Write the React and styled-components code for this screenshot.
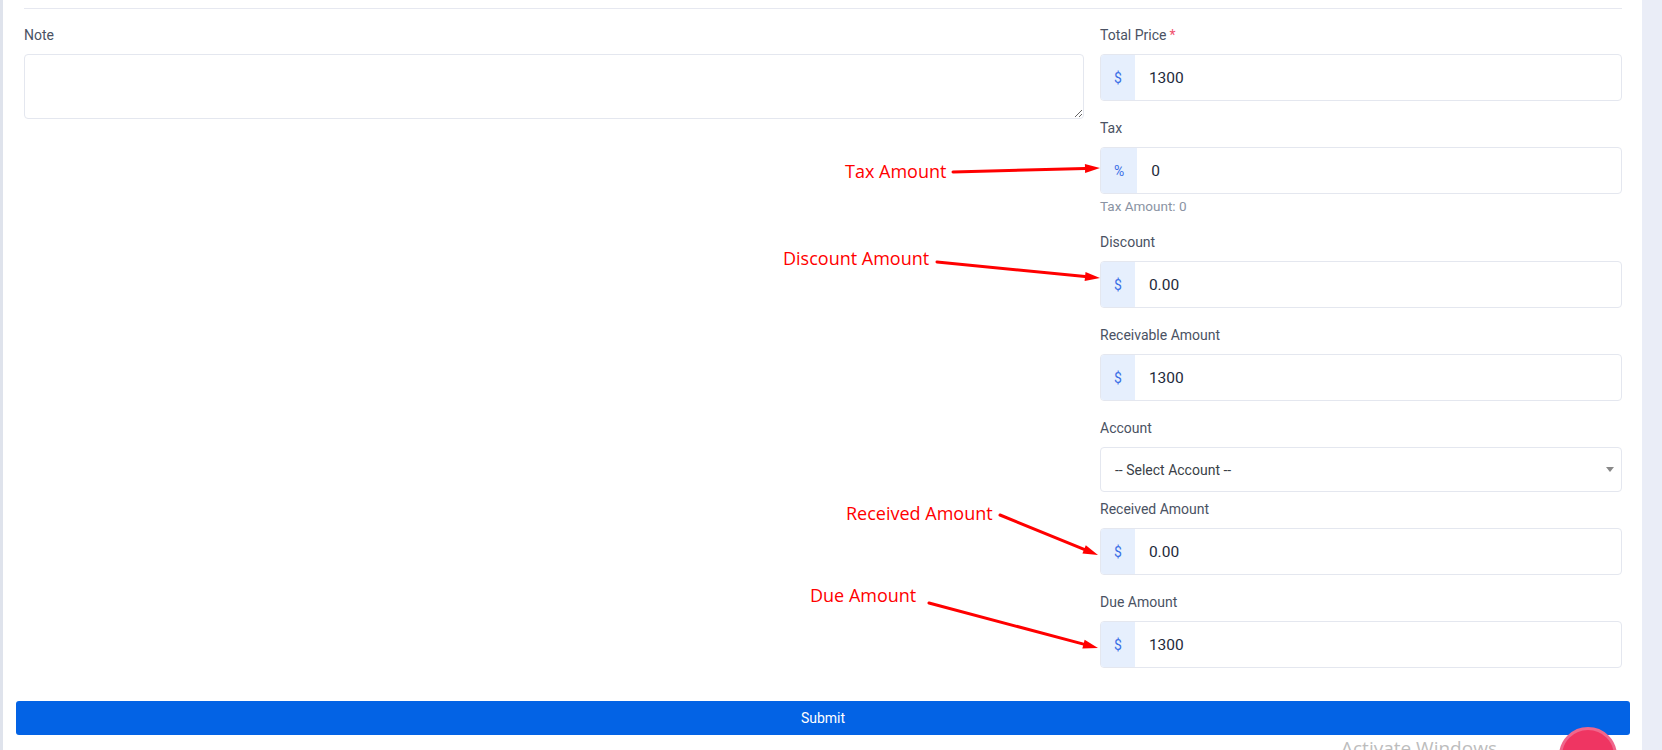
import React from "react";
import styled, { createGlobalStyle } from "styled-components";

const GlobalStyle = createGlobalStyle`
  html, body { margin: 0; padding: 0; background: #eaedf7; }
  body { font-family: Roboto, "Liberation Sans", Arial, sans-serif; }
  *, *::before, *::after { box-sizing: border-box; }
`;

const Page = styled.div`
  position: relative;
  display: flex;
  height: 750px;
  overflow: hidden;
  background: #eaedf7;
`;

const LeftRail = styled.div`
  flex: 0 0 3px;
  background: #dfe3ec;
`;

const Card = styled.div`
  flex: 0 0 1639px;
  background: #ffffff;
  padding: 0 12px 0 13px;
`;

const Divider = styled.div`
  height: 1px;
  margin: 8px 8px 0;
  background: #e6e8f0;
`;

const Row = styled.div`
  display: flex;
  gap: 16px;
  padding: 0 8px;
  margin-top: 16px;
`;

const Col = styled.div`
  flex: 0 0 ${(p) => p.$w}px;
  display: flex;
  flex-direction: column;
`;

const Group = styled.div`
  margin-bottom: ${(p) => (p.$tight ? 7 : 17)}px;
`;

const Label = styled.label`
  display: block;
  font-size: 14px;
  line-height: 20px;
  color: #4a5263;
  margin-bottom: 9px;
`;

const Required = styled.span`
  color: #f0506e;
  margin-left: 3px;
`;

const TextArea = styled.textarea`
  display: block;
  width: 100%;
  height: 65px;
  border: 1px solid #e4e7ef;
  border-radius: 4px;
  padding: 8px 12px;
  font-family: Roboto, sans-serif;
  font-size: 14px;
  outline: none;
  resize: both;
`;

const InputGroup = styled.div`
  display: flex;
  height: 47px;
  border: 1px solid #e4e7ef;
  border-radius: 4px;
  overflow: hidden;
  background: #fff;
`;

const Addon = styled.span`
  display: flex;
  align-items: center;
  padding: 0 13px;
  background: #e6effd;
  color: #3b6fe6;
  font-size: 14px;
`;

const Input = styled.input`
  flex: 1;
  min-width: 0;
  border: none;
  outline: none;
  padding: 0 14px;
  font-family: Roboto, sans-serif;
  font-size: 15.5px;
  color: #1e2a3b;
  background: transparent;
`;

const Help = styled.div`
  margin-top: 3px;
  font-size: 13.5px;
  line-height: 18px;
  color: #8a93a3;
`;

const SelectBox = styled.div`
  display: flex;
  align-items: center;
  justify-content: space-between;
  height: 45px;
  border: 1px solid #e4e7ef;
  border-radius: 4px;
  padding: 0 7px 0 14px;
  font-size: 14px;
  color: #3a3f47;
`;

const Caret = styled.span`
  width: 0;
  height: 0;
  border-left: 4px solid transparent;
  border-right: 4px solid transparent;
  border-top: 5px solid #888;
`;

const SubmitButton = styled.button`
  display: block;
  width: 100%;
  height: 34px;
  margin-top: 16px;
  border: none;
  border-radius: 3px;
  background: #0363e5;
  color: #fff;
  font-family: Roboto, sans-serif;
  font-size: 14px;
  font-weight: 400;
`;

const Overlay = styled.svg`
  position: absolute;
  left: 0;
  top: 0;
  pointer-events: none;
`;

const Note = styled.span`
  position: absolute;
  font-family: "Open Sans", "Noto Sans", sans-serif;
  font-size: 18px;
  line-height: 24px;
  color: #ff0000;
  white-space: nowrap;
`;

const Watermark = styled.span`
  position: absolute;
  left: 1341px;
  top: 735px;
  font-family: "Open Sans", "Noto Sans", sans-serif;
  font-size: 19px;
  line-height: 26px;
  color: #bdbdbd;
  white-space: nowrap;
`;

const Fab = styled.div`
  position: absolute;
  left: 1559px;
  top: 727px;
  width: 58px;
  height: 58px;
  border-radius: 50%;
  background: #ef3562;
  border: 3px solid #f0668c;
`;

const arrows = [
  { x1: 953, y1: 172, x2: 1100, y2: 168 },
  { x1: 937, y1: 262, x2: 1100, y2: 278 },
  { x1: 1000, y1: 515, x2: 1098, y2: 555 },
  { x1: 929, y1: 603, x2: 1098, y2: 648 },
];

const notes = [
  { text: "Tax Amount", left: 845, top: 159 },
  { text: "Discount Amount", left: 783, top: 246 },
  { text: "Received Amount", left: 846, top: 501 },
  { text: "Due Amount", left: 810, top: 583 },
];

function Arrow({ x1, y1, x2, y2 }) {
  const dx = x2 - x1;
  const dy = y2 - y1;
  const len = Math.hypot(dx, dy);
  const ux = dx / len;
  const uy = dy / len;
  const hl = 15;
  const hw = 4.5;
  const bx = x2 - ux * hl;
  const by = y2 - uy * hl;
  const pts = `${x2},${y2} ${bx - uy * hw},${by + ux * hw} ${bx + uy * hw},${by - ux * hw}`;
  return (
    <g>
      <line x1={x1} y1={y1} x2={bx} y2={by} stroke="#ff0000" strokeWidth="3" strokeLinecap="round" />
      <polygon points={pts} fill="#ff0000" />
    </g>
  );
}

function MoneyField({ label, symbol = "$", value, required, help }) {
  return (
    <Group>
      <Label>
        {label}
        {required && <Required>*</Required>}
      </Label>
      <InputGroup>
        <Addon>{symbol}</Addon>
        <Input defaultValue={value} />
      </InputGroup>
      {help && <Help>{help}</Help>}
    </Group>
  );
}

export default function App() {
  return (
    <>
      <GlobalStyle />
      <Page>
        <LeftRail />
        <Card>
          <Divider />
          <Row>
            <Col $w={1060}>
              <Group>
                <Label>Note</Label>
                <TextArea />
              </Group>
            </Col>
            <Col $w={522}>
              <MoneyField label="Total Price" value="1300" required />
              <MoneyField label="Tax" symbol="%" value="0" help="Tax Amount: 0" />
              <MoneyField label="Discount" value="0.00" />
              <MoneyField label="Receivable Amount" value="1300" />
              <Group $tight>
                <Label>Account</Label>
                <SelectBox>
                  <span>-- Select Account --</span>
                  <Caret />
                </SelectBox>
              </Group>
              <MoneyField label="Received Amount" value="0.00" />
              <MoneyField label="Due Amount" value="1300" />
            </Col>
          </Row>
          <SubmitButton type="button">Submit</SubmitButton>
        </Card>
        <Overlay width="1662" height="750" viewBox="0 0 1662 750">
          {arrows.map((a, i) => (
            <Arrow key={i} {...a} />
          ))}
        </Overlay>
        {notes.map((n) => (
          <Note key={n.text} style={{ left: n.left, top: n.top }}>
            {n.text}
          </Note>
        ))}
        <Watermark>Activate Windows</Watermark>
        <Fab />
      </Page>
    </>
  );
}
